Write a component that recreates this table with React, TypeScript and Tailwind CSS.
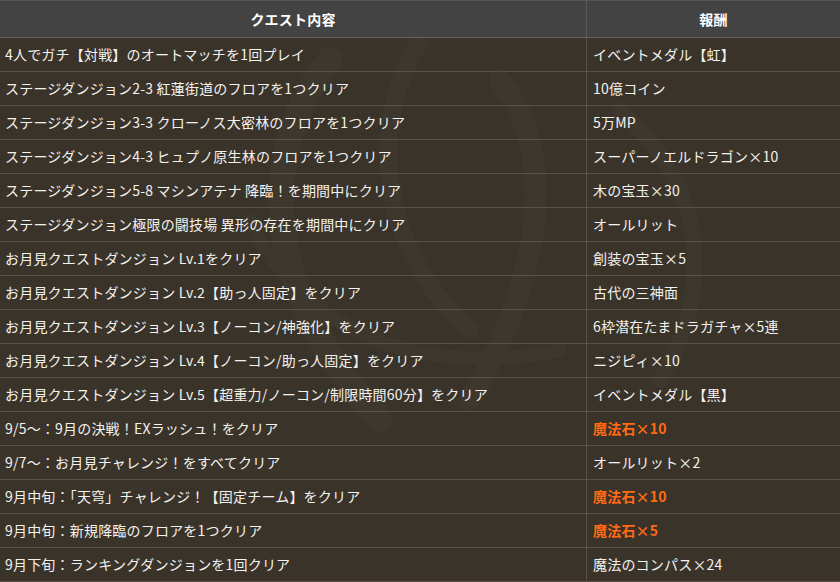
const rows: { quest: string; reward: string; hot?: boolean }[] = [
  { quest: "4人でガチ【対戦】のオートマッチを1回プレイ", reward: "イベントメダル【虹】" },
  { quest: "ステージダンジョン2-3 紅蓮街道のフロアを1つクリア", reward: "10億コイン" },
  { quest: "ステージダンジョン3-3 クローノス大密林のフロアを1つクリア", reward: "5万MP" },
  { quest: "ステージダンジョン4-3 ヒュプノ原生林のフロアを1つクリア", reward: "スーパーノエルドラゴン×10" },
  { quest: "ステージダンジョン5-8 マシンアテナ 降臨！を期間中にクリア", reward: "木の宝玉×30" },
  { quest: "ステージダンジョン極限の闘技場 異形の存在を期間中にクリア", reward: "オールリット" },
  { quest: "お月見クエストダンジョン Lv.1をクリア", reward: "創装の宝玉×5" },
  { quest: "お月見クエストダンジョン Lv.2【助っ人固定】をクリア", reward: "古代の三神面" },
  { quest: "お月見クエストダンジョン Lv.3【ノーコン/神強化】をクリア", reward: "6枠潜在たまドラガチャ×5連" },
  { quest: "お月見クエストダンジョン Lv.4【ノーコン/助っ人固定】をクリア", reward: "ニジピィ×10" },
  { quest: "お月見クエストダンジョン Lv.5【超重力/ノーコン/制限時間60分】をクリア", reward: "イベントメダル【黒】" },
  { quest: "9/5～：9月の決戦！EXラッシュ！をクリア", reward: "魔法石×10", hot: true },
  { quest: "9/7～：お月見チャレンジ！をすべてクリア", reward: "オールリット×2" },
  { quest: "9月中旬：「天穹」チャレンジ！【固定チーム】をクリア", reward: "魔法石×10", hot: true },
  { quest: "9月中旬：新規降臨のフロアを1つクリア", reward: "魔法石×5", hot: true },
  { quest: "9月下旬：ランキングダンジョンを1回クリア", reward: "魔法のコンパス×24" },
];

function Watermark() {
  return (
    <svg
      className="absolute inset-0 pointer-events-none"
      width="840"
      height="582"
      viewBox="0 0 840 582"
    >
      <g fill="none" stroke="#4a4237" strokeLinecap="round" opacity="0.3">
        <path d="M330 60 C 250 160, 270 300, 380 420" strokeWidth="26" />
        <path d="M420 40 C 360 140, 390 260, 470 330" strokeWidth="18" />
        <path d="M500 80 C 560 160, 540 280, 470 400" strokeWidth="22" />
        <path d="M250 220 C 300 330, 420 380, 560 350" strokeWidth="14" />
        <path d="M620 110 C 700 180, 720 280, 660 380" strokeWidth="16" />
      </g>
    </svg>
  );
}

export default function App() {
  return (
    <div
      className="relative w-[840px] h-[582px] overflow-hidden bg-[#3a332a] text-[14px] text-[#f4f2ee] tracking-[0.2px]"
      style={{ fontFamily: '"Noto Sans CJK JP", "Noto Sans", sans-serif' }}
    >
      <Watermark />
      <div className="relative">
        <div className="flex h-[38px] bg-[#434343] border-t border-[#555] border-b border-b-[#6a6052] font-bold text-white">
          <div className="w-[587px] flex items-center justify-center border-r border-[#5a5a5a]">
            クエスト内容
          </div>
          <div className="flex-1 flex items-center justify-center">報酬</div>
        </div>
        {rows.map((r, i) => (
          <div key={i} className="flex h-[34px] border-b border-[#5a5046]">
            <div className="w-[587px] flex items-center pl-[5px] border-r border-[#5a5046] whitespace-nowrap">
              {r.quest}
            </div>
            <div
              className={
                r.hot
                  ? "flex-1 flex items-center pl-[6px] font-bold text-[#ff6a13] whitespace-nowrap"
                  : "flex-1 flex items-center pl-[6px] whitespace-nowrap"
              }
            >
              {r.reward}
            </div>
          </div>
        ))}
      </div>
    </div>
  );
}
